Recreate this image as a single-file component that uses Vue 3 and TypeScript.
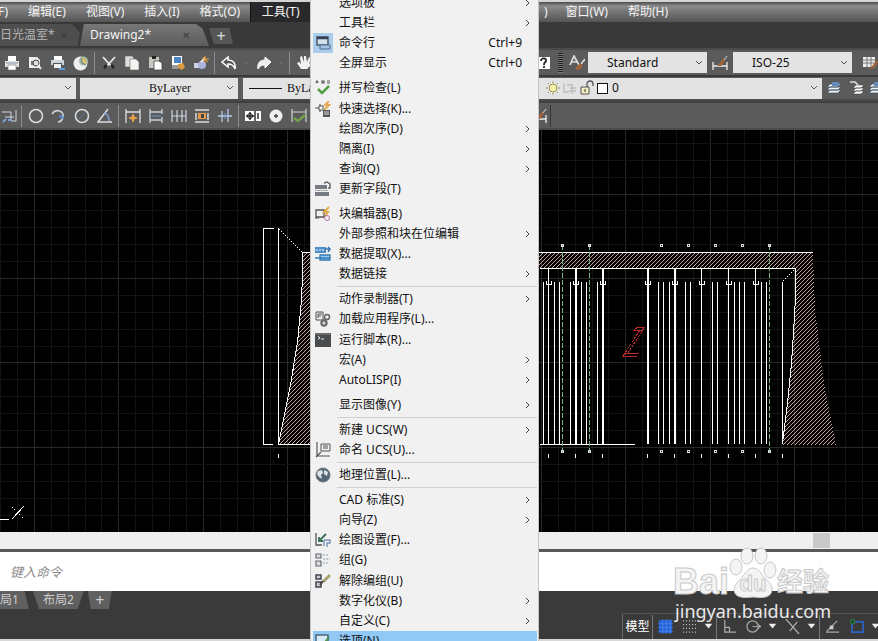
<script setup lang="ts">
import { ref } from 'vue'

interface MenuEntry {
  label: string
  icon?: string
  sub?: boolean
  keys?: string
  checked?: boolean
  active?: boolean
}
type MenuRow = MenuEntry | { rule: 'gap' | 'line' }

const icons: Record<string, string> = {
  print: '<path d="M4 1h8v5H4z" fill="#fff"/><path d="M1 6h14v6H1z" fill="#dce3ea"/><path d="M4 10h8v5H4z" fill="#fff" stroke="#777" stroke-width=".6"/><path d="M2 8h12" stroke="#89a" />',
  preview: '<path d="M2 2h8l3 3v8H2z" fill="#eee"/><path d="M4 6h7v4H4z" fill="#777"/><circle cx="9" cy="8" r="3" fill="#ddd" stroke="#444"/><path d="M11 10l3 4" stroke="#eee" stroke-width="2"/>',
  plot: '<path d="M4 1h8v4H4z" fill="#fff"/><path d="M1 5h13v5H1z" fill="#cdd5da"/><path d="M3 8h9v4H3z" fill="#555"/><path d="M4 9h7v4H4z" fill="#eee"/><path d="M9 14h6" stroke="#5b9be0" stroke-width="2"/>',
  globe: '<circle cx="7.500" cy="8.500" r="7" fill="#eee"/><circle cx="10.500" cy="6" r="4.500" fill="#a7bba0"/><path d="M8 3l4 1 2 4-4 1z" fill="#d9c46a"/><path d="M8 3l1 5 4 2" stroke="#679" fill="none"/>',
  cut: '<path d="M2 2l9 10M14 2L5 12" stroke="#e8e8e8" stroke-width="1.800"/><path d="M3 13l3-3M13 13l-3-3" stroke="#222" stroke-width="2.500"/>',
  copy: '<path d="M1 1h7l2 2v9H1z" fill="#ddd" stroke="#666" stroke-width=".6"/><path d="M6 4h6l3 3v8H6z" fill="#f4f4f0" stroke="#666" stroke-width=".6"/>',
  paste: '<path d="M2 2h10v11H2z" fill="#c8c8c0"/><path d="M5 1h4v3H5z" fill="#222"/><path d="M7 6h5l3 2v7H7z" fill="#fff" stroke="#444" stroke-width=".8"/>',
  match: '<path d="M2 1h10v9H2z" fill="#fff"/><path d="M4 2h7v6H4z" fill="#4a83c4"/><path d="M2 11h7M2 13h6" stroke="#ddd"/><path d="M8 9l5-1 2 4-3 3-4-2z" fill="#dc9b43"/>',
  block: '<path d="M1 8h9v5H1z" fill="#ccd3e4"/><circle cx="9" cy="10" r="4" fill="#aab4dc"/><path d="M8 7l4-4" stroke="#eee" stroke-width="2"/><path d="M12 1v7M9 4h7M10 2l5 5" stroke="#f0a040"/>',
  undo: '<path d="M1 7l6-5v3c5 0 8 3 7 9-1-3-3-5-7-5v3z" fill="#555" stroke="#fff" stroke-width="1.500"/>',
  redo: '<path d="M15 7L9 2v3C4 5 1 8 2 14c2-3 3-4 7-4v3z" fill="#eee" stroke="#fff"/>',
  dash: '<path d="M5 8h6" stroke="#888" stroke-width="1.500"/>',
  hand: '<path d="M5 14L1 8l2-1 2 2-1-7 2-1 2 6V1h2l1 6 2-5 2 1-2 6 2-2 1 2-5 5z" fill="#f2f2f2"/>',
  help: '<path d="M1 2h13v12H1z" fill="#fff"/><path d="M5 6c0-4 6-3 5 0-1 2-2 1-2 4M8 11v2" stroke="#222" stroke-width="1.800" fill="none"/>',
  textstyle: '<path d="M1 10L5 1l5 9M3 7h5" stroke="#ddd" stroke-width="1.700" fill="none"/><path d="M16 4l-4 5" stroke="#ddd" stroke-width="1.500"/><path d="M11 8l3 3-4 4-4-1z" fill="#a5633a"/>',
  dimstyle: '<path d="M1 7v8M15 7v8M1 11h14" stroke="#eee" stroke-width="1.300"/><path d="M15 1l-4 5" stroke="#ddd"/><path d="M11 4l2 2-4 5-4 0z" fill="#a5633a"/>',
  tablestyle: '<path d="M1 2h12v10H1z" fill="#eee"/><path d="M1 5h12M1 8h12M5 2v10M9 2v10" stroke="#777"/><path d="M15 5l-5 6-3 3 5-1 4-6z" fill="#a5633a"/>',
  layers: '<path d="M4 4h11l-3 3H1zM4 7h11l-3 3H1zM4 10h11l-3 3H1z" fill="#f0f3f8" stroke="#456" stroke-width=".8"/><path d="M6 2h7v4H6z" fill="#6689c0"/>',
  layerprev: '<path d="M7 5h8l-3 3H4zM7 8h8l-3 3H4zM7 11h8l-3 3H4z" fill="#fff" stroke="#444" stroke-width=".6"/><path d="M1 2h5l3 3" stroke="#ddd" stroke-width="1.500" fill="none"/>',
  ordinate: '<path d="M0 4h9v9M3 9h9M9 13h5V2" stroke="#cfd8e4" fill="none"/><path d="M1 14l3-3M6 12h4" stroke="#7fa3d8" stroke-width="2"/>',
  circle: '<circle cx="8" cy="8" r="6.500" stroke="#d5dbe1" stroke-width="1.600" fill="none"/>',
  arc: '<path d="M1 6c4-6 12-3 11 3-1 4-3 5-5 5" stroke="#c8d0da" stroke-width="1.700" fill="none"/><path d="M8 8l5 2" stroke="#5a89c9" stroke-width="2"/>',
  diameter: '<circle cx="8" cy="8" r="6.500" stroke="#d5dbe1" stroke-width="1.600" fill="none"/><path d="M5 11l6-6" stroke="#5f7da6"/>',
  angle: '<path d="M11 1L1 14h14" stroke="#ddd" stroke-width="1.500" fill="none"/><path d="M7 5c4 1 5 4 5 8" stroke="#7fa3d8" stroke-width="1.500" fill="none"/>',
  quick: '<path d="M1 1v14M15 1v14M1 4h14" stroke="#ddd" stroke-width="1.300"/><path d="M8 6l1 3 3 1-3 1-1 3-1-3-3-1 3-1z" fill="#e7a04a" stroke="#e7a04a"/>',
  baseline: '<path d="M2 1v14M14 1v5M14 9v6M2 4h12M2 12h12" stroke="#c6d0dd" stroke-width="1.300"/><path d="M4 8h9" stroke="#6794c9"/>',
  chain: '<path d="M1 2v12M6 2v12M11 2v12M15 2v12M1 8h14" stroke="#ccd6e0" stroke-width="1.200"/>',
  space: '<path d="M1 2h14M1 14h14M2 5v7M14 5v7" stroke="#ddd" stroke-width="1.400"/><path d="M4 5h8v6H4z" fill="#e19b4a"/><path d="M7 6v4h3V6z" fill="#444"/>',
  breakd: '<path d="M1 8h14M5 3v11M11 1v13" stroke="#b5cbe8" stroke-width="1.300"/><path d="M7 5l3 3-3 3" stroke="#6a96cf" fill="none"/>',
  tol: '<path d="M0 3h16v10H0z" fill="#fff"/><circle cx="5" cy="8" r="2.500" stroke="#222" fill="none"/><path d="M5 4v8M1 8h8M10 3v10M13 5v6" stroke="#222" stroke-width="1.400"/>',
  center: '<circle cx="8" cy="8" r="6.500" fill="#eee"/><path d="M8 6v4M6 8h4" stroke="#444" stroke-width="1.500"/>',
  inspect: '<path d="M1 1v13M15 1v13M1 4h14" stroke="#ccd6cc" stroke-width="1.200"/><path d="M3 10l4 3 7-6" stroke="#74a24c" stroke-width="2.500" fill="none"/>',
  window: '<path d="M2 2h11v8H2z" fill="#d5e0e8" stroke="#485b72" stroke-width="1.500"/><path d="M2 3h11" stroke="#33435a" stroke-width="2.500"/><path d="M5 10h10v4H5z" fill="#a9c4de" stroke="#4b6b91"/>',
  spell: '<path d="M1 3l1-2 1 2M7 1h2v2H7zM12 1h3M12 3h3" stroke="#555" stroke-width="1.200" fill="none"/><path d="M3 9l4 4 7-7" stroke="#54a044" stroke-width="2.500" fill="none"/>',
  select: '<path d="M0 7h8M5 3v8" stroke="#555" stroke-width="1.200"/><path d="M4 5h4v4H4z" fill="#fff" stroke="#555"/><path d="M14 0l-4 4h4l-5 5" stroke="#e2ab54" stroke-width="2" fill="none"/><path d="M8 9h7v7H8z" fill="#555"/><path d="M9 11h5M9 13h5" stroke="#ddd"/>',
  field: '<path d="M0 4h12v4H0zM0 11h14v4H0z" fill="#777c84"/><path d="M0 9.500h13" stroke="#aaa"/><path d="M9 2l3-1 3 2v4h-2" stroke="#666" stroke-width="1.500" fill="none"/>',
  blockedit: '<path d="M1 4h8v7H1z" stroke="#555" stroke-width="1.300" fill="none"/><path d="M14 1l-5 5h4l-3 4" stroke="#e0aa48" stroke-width="2" fill="none"/><circle cx="12" cy="12" r="2.500" stroke="#b673a3" fill="none"/><path d="M0 12h4" stroke="#555"/>',
  extract: '<path d="M0 1h11v6H0z" fill="#4d8fc7"/><path d="M1 4h8" stroke="#fff" stroke-dasharray="2 1"/><path d="M10 3h5M13 1l2 2-2 3" stroke="#3a79b0" stroke-width="1.500" fill="none"/><path d="M5 9h10v5H5z" fill="#9ccbee" stroke="#347bb5" stroke-width="1.300"/><path d="M0 12h15" stroke="#347bb5" stroke-width="1.500"/>',
  load: '<path d="M1 1h7v8H1z" fill="#eee" stroke="#555"/><path d="M3 7V3h4M3 5h3" stroke="#555" fill="none"/><circle cx="12" cy="6" r="2.500" stroke="#666" stroke-width="1.500" fill="none"/><circle cx="9" cy="12" r="2.700" stroke="#666" stroke-width="2" fill="#ccc"/>',
  script: '<path d="M0 1h16v14H0z" fill="#4a4d4f"/><path d="M0 2h16" stroke="#888"/><path d="M3 4l2 2-2 1M6 7h3" stroke="#eee" fill="none"/>',
  ucs: '<path d="M2 0v14h13M1 15l5-5" stroke="#555" stroke-width="1.200" fill="none"/><path d="M6 2h9v7H6z" fill="#eee" stroke="#555"/><path d="M8 4h5M8 6h5" stroke="#555"/>',
  earth: '<circle cx="8" cy="8" r="7" fill="#526574" stroke="#777"/><path d="M3 4l4-1 1 3-2 2 1 4-3-2-2-3zM9 3l4 2-1 4-3-2z" fill="#dce5e9"/>',
  draft: '<path d="M1 1v12h6" stroke="#555" stroke-width="1.300" fill="none"/><path d="M11 2L4 9M4 5v4h4" stroke="#3c7057" stroke-width="1.800" fill="none"/><path d="M9 8h6v3h-3v4M9 8v6" stroke="#7e96ba" stroke-width="1.500" fill="none"/>',
  group: '<path d="M1 2h5v4H1zM1 9h5v5H1z" stroke="#667" stroke-width="1.200" fill="#ddd"/><path d="M8 3h6M8 7h7M8 11h6" stroke="#8aa5bc" stroke-dasharray="2 1"/>',
  ungroup: '<path d="M1 2h5v4H1zM1 9h5v5H1z" stroke="#445" stroke-width="1.500" fill="#ccc"/><path d="M15 2L8 9" stroke="#a8a071" stroke-width="3"/><path d="M8 8l-3 4" stroke="#444" stroke-width="2"/>',
  options: '<path d="M1 2h12v11H1z" fill="#d7eaf6" stroke="#4b657b" stroke-width="1.500"/><path d="M5 9l3 3 6-8" stroke="#4f9448" stroke-width="2" fill="none"/>',
  sgrid: '<path d="M1 1h14v14H1z" fill="#2464d8"/><path d="M5 0v16M9 0v16M13 0v16M0 5h16M0 9h16M0 13h16" stroke="#5a92f2" stroke-width=".6"/>',
  sdots: '<path d="M1 2h14M1 6h14M1 10h14M1 14h14" stroke="#bbb" stroke-width="1.200" stroke-dasharray="1.200 2"/>',
  sarrow: '<path d="M4 5h8l-4 5z" fill="#eee"/>',
  sortho: '<path d="M3 1v13h12M3 9h5v5" stroke="#aaa" stroke-width="1.300" fill="none"/>',
  spolar: '<circle cx="7" cy="8" r="6" stroke="#aaa" stroke-width="1.300" fill="none"/><path d="M7 8h9M12 5l4 3-4 3" stroke="#aaa" fill="none"/>',
  siso: '<path d="M1 0l14 16M5 13L13 3" stroke="#aaa" stroke-width="1.400"/>',
  strack: '<path d="M1 14h14M2 13L13 2" stroke="#aaa" stroke-width="1.300"/><path d="M5 7h4v4H5z" fill="#ccc"/>',
  sosnap: '<path d="M3 3h12v11H3z" stroke="#2e62c7" stroke-width="1.800" fill="none"/><circle cx="4" cy="3" r="2.500" fill="#174d27" stroke="#3c8b4d"/>',
  sun: '<circle cx="8" cy="8" r="4" fill="#f6f3a8" stroke="#99935a"/><path d="M8 1v2M8 13v2M1 8h2M13 8h2M3 3l1 1M12 12l1 1M13 3l-1 1M3 13l1-1" stroke="#99935a"/>',
  freeze: '<path d="M2 3v9h5M5 5h6M8 8h6M10 5v9M7 11h7" stroke="#bdbdbd" stroke-width="1.300" fill="none"/>',
  lock: '<path d="M2 7h8v7H2z" fill="#f3efc2" stroke="#555"/><path d="M8 7V4c0-4 6-4 6 0v2" stroke="#555" stroke-width="1.300" fill="none"/><path d="M6 9v3" stroke="#333"/>',
}

const topMenus = ['编辑(E)', '视图(V)', '插入(I)', '格式(O)']
const rightMenus = ['窗口(W)', '帮助(H)']
const standardTools: string[][] = [
  ['print', 'preview', 'plot', 'globe'],
  ['cut', 'copy', 'paste', 'match', 'block'],
  ['undo', 'dash', 'redo', 'dash'],
  ['hand'],
]
const dimTools: string[][] = [
  ['ordinate'],
  ['circle', 'arc', 'diameter', 'angle'],
  ['quick', 'baseline', 'chain', 'space', 'breakd'],
  ['tol', 'center', 'inspect'],
]
const statusTools: string[][] = [
  ['sgrid', 'sdots', 'sarrow'],
  ['sortho', 'spolar', 'sarrow', 'siso', 'sarrow'],
  ['strack', 'sosnap', 'sarrow'],
]

const menu: MenuRow[] = [
  { label: '选项板', sub: true },
  { label: '工具栏', sub: true },
  { label: '命令行', icon: 'window', keys: 'Ctrl+9', checked: true },
  { label: '全屏显示', keys: 'Ctrl+0' },
  { rule: 'gap' },
  { label: '拼写检查(L)', icon: 'spell' },
  { label: '快速选择(K)...', icon: 'select' },
  { label: '绘图次序(D)', sub: true },
  { label: '隔离(I)', sub: true },
  { label: '查询(Q)', sub: true },
  { label: '更新字段(T)', icon: 'field' },
  { rule: 'gap' },
  { label: '块编辑器(B)', icon: 'blockedit' },
  { label: '外部参照和块在位编辑', sub: true },
  { label: '数据提取(X)...', icon: 'extract' },
  { label: '数据链接', sub: true },
  { rule: 'line' },
  { label: '动作录制器(T)', sub: true },
  { label: '加载应用程序(L)...', icon: 'load' },
  { label: '运行脚本(R)...', icon: 'script' },
  { label: '宏(A)', sub: true },
  { label: 'AutoLISP(I)', sub: true },
  { rule: 'gap' },
  { label: '显示图像(Y)', sub: true },
  { rule: 'line' },
  { label: '新建 UCS(W)', sub: true },
  { label: '命名 UCS(U)...', icon: 'ucs' },
  { rule: 'line' },
  { label: '地理位置(L)...', icon: 'earth' },
  { rule: 'line' },
  { label: 'CAD 标准(S)', sub: true },
  { label: '向导(Z)', sub: true },
  { label: '绘图设置(F)...', icon: 'draft' },
  { label: '组(G)', icon: 'group' },
  { label: '解除编组(U)', icon: 'ungroup' },
  { label: '数字化仪(B)', sub: true },
  { label: '自定义(C)', sub: true },
  { label: '选项(N)...', icon: 'options', active: true },
]

const command = ref('')

// Drawing geometry
const gridLines = (start: number, count: number) =>
  Array.from({ length: count }, (_, i) => ({ at: Math.round(start + i * 16.9), major: i % 5 === 2 }))
const gridX = gridLines(0, 53)
const gridY = gridLines(75.2, 28)
const thin = [543, 554, 559, 570, 581, 586, 597, 658, 663, 669, 685, 690, 712, 717, 734, 739, 744, 761, 766, 782]
const posts = [
  { x: 548, w: 1 }, { x: 575, w: 2 }, { x: 602, w: 2 }, { x: 647, w: 2 }, { x: 674, w: 2 },
  { x: 701, w: 1 }, { x: 728, w: 1 }, { x: 755, w: 1 },
]
const axes = [562, 589, 769]
const marks = [562, 589, 661, 688, 715, 742, 769]
</script>

<template>
  <div class="app">
    <nav class="menubar" aria-label="主菜单">
      <button class="stub">F)</button>
      <button v-for="m in topMenus" :key="m">{{ m }}</button>
      <button class="open">工具(T)</button>
      <div class="menubar-right">
        <button class="stub-right">)</button>
        <button v-for="m in rightMenus" :key="m">{{ m }}</button>
      </div>
    </nav>

    <div class="tabs">
      <button class="tab dim"><span>日光温室*</span><span class="x">✕</span></button>
      <button class="tab current"><span>Drawing2*</span><span class="x">✕</span></button>
      <button class="tab add" aria-label="新建">+</button>
    </div>

    <div class="bar bar-std">
      <div v-for="(g, i) in standardTools" :key="i" class="group">
        <button v-for="(t, j) in g" :key="j" class="tool" :class="{ narrow: t === 'dash' }" :aria-label="t">
          <svg viewBox="0 0 16 16" v-html="icons[t]"></svg>
        </button>
      </div>
      <div class="right">
        <button class="tool" aria-label="help"><svg viewBox="0 0 16 16" v-html="icons.help"></svg></button>
        <span class="grip"></span>
        <button class="tool" aria-label="text style"><svg viewBox="0 0 16 16" v-html="icons.textstyle"></svg></button>
        <div class="combo style-combo">
          <select aria-label="文字样式"><option>Standard</option></select>
          <svg class="chev" viewBox="0 0 8 6"><path d="M1 1l3 3 3-3" /></svg>
        </div>
        <button class="tool wide" aria-label="dimension style"><svg viewBox="0 0 16 16" v-html="icons.dimstyle"></svg></button>
        <div class="combo style-combo">
          <select aria-label="标注样式"><option>ISO-25</option></select>
          <svg class="chev" viewBox="0 0 8 6"><path d="M1 1l3 3 3-3" /></svg>
        </div>
        <button class="tool last" aria-label="table style"><svg viewBox="0 0 16 16" v-html="icons.tablestyle"></svg></button>
      </div>
    </div>

    <div class="bar bar-props">
      <div class="combo first-combo">
        <select aria-label="图层状态"><option></option></select>
        <svg class="chev" viewBox="0 0 8 6"><path d="M1 1l3 3 3-3" /></svg>
      </div>
      <div class="combo color-combo">
        <select aria-label="颜色"><option>ByLayer</option></select>
        <svg class="chev" viewBox="0 0 8 6"><path d="M1 1l3 3 3-3" /></svg>
      </div>
      <div class="combo line-combo">
        <span class="sample"></span>
        <select aria-label="线型"><option>ByLayer</option></select>
      </div>
      <div class="right">
        <div class="combo layer-combo">
          <svg class="li" viewBox="0 0 16 16" v-html="icons.sun"></svg>
          <svg class="li" viewBox="0 0 16 16" v-html="icons.freeze"></svg>
          <svg class="li" viewBox="0 0 16 16" v-html="icons.lock"></svg>
          <span class="swatch"></span>
          <select aria-label="图层"><option>0</option></select>
          <svg class="chev" viewBox="0 0 8 6"><path d="M1 1l3 3 3-3" /></svg>
        </div>
        <button class="tool" aria-label="layers"><svg viewBox="0 0 16 16" v-html="icons.layers"></svg></button>
        <button class="tool" aria-label="layer previous"><svg viewBox="0 0 16 16" v-html="icons.layerprev"></svg></button>
        <button class="tool cut" aria-label="layer states"><svg viewBox="0 0 16 16" v-html="icons.layers"></svg></button>
      </div>
    </div>

    <div class="bar bar-dim">
      <div v-for="(g, i) in dimTools" :key="i" class="group">
        <button v-for="t in g" :key="t" class="tool" :class="{ lead: t === 'ordinate' }" :aria-label="t">
          <svg viewBox="0 0 16 16" v-html="icons[t]"></svg>
        </button>
      </div>
      <div class="right dim-end">
        <button class="tool" aria-label="dimension style"><svg viewBox="0 0 16 16" v-html="icons.dimstyle"></svg></button>
      </div>
    </div>

    <main class="canvas">
      <svg class="drawing" viewBox="0 130 878 402" preserveAspectRatio="xMidYMid slice" shape-rendering="crispEdges">
        <defs>
          <pattern id="hatch" width="4" height="4" patternUnits="userSpaceOnUse">
            <path d="M3 0h1v1h-1zM2 1h1v1h-1zM1 2h1v1h-1zM0 3h1v1h-1z" fill="#c79f9b" />
          </pattern>
        </defs>
        <rect v-for="g in gridX" :key="'x' + g.at" :x="g.at" y="130" width="1" height="402" :fill="g.major ? '#292929' : '#131313'" />
        <rect v-for="g in gridY" :key="'y' + g.at" x="0" :y="g.at" width="878" height="1" :fill="g.major ? '#292929' : '#131313'" />

        <path d="M303 252H813L815 310L824 383L836 445H782L787 403L791 363L794 317L795 295V268H310V445H279L290 385L297 342L301 300L303 275Z" fill="url(#hatch)" />
        <g fill="none" stroke="#fff">
          <path d="M274 228.500H263.500V444.500H273M278.500 228V444M310 444.500H278.500L290.500 385L297.500 342L301.500 300L302.500 275V252.500H813" />
          <path d="M279 229L302 252" stroke-dasharray="1.400 1.400" />
          <path d="M540 268.500H795.500V295L794.500 317L791.500 363L787.500 403L782.500 443" />
          <path d="M783 281L794 270" stroke-dasharray="1.400 1.400" />
          <path d="M540 444.500H635M278.500 454v4" />
          <path v-for="p in posts" :key="p.x" :d="`M${p.x - 2} 281v3h5v-3M${p.x + 0.5} 454v4`" />
          <path d="M782.500 454v4" />
        </g>
        <rect v-for="x in thin" :key="x" :x="x" y="282" width="1" height="162" fill="#fff" />
        <rect v-for="p in posts" :key="'p' + p.x" :x="p.x" y="268" :width="p.w" height="176" fill="#fff" />
        <path v-for="x in axes" :key="'a' + x" :d="`M${x + 0.5} 245V452`" stroke="#72b47b" stroke-dasharray="5 2" />
        <g fill="none" stroke="#ddd">
          <path v-for="x in marks" :key="'m' + x" :d="`M${x - 1} 244.500h2v1.500h-2zM${x - 1} 450.500h2v1.500h-2z`" />
        </g>
        <g fill="none" stroke="#b5282c">
          <path d="M633 331L637 327.500H645M639 353.500H624M622 356.500H637M634 330.500H643" />
          <path d="M644 328L628 353M640 330L623 356" stroke-dasharray="3 1" />
        </g>
        <g fill="none" stroke="#fff">
          <path d="M0 519.500H9M12 519L24 506" />
          <path d="M12 507L24 519" stroke-dasharray="1.400 2" />
        </g>
      </svg>
    </main>

    <div class="scroll"><span class="thumb"></span></div>

    <div class="command">
      <input v-model="command" type="text" placeholder="键入命令" aria-label="键入命令" />
    </div>

    <footer class="footer">
      <div class="layouts">
        <button class="layout head">局1</button>
        <button class="layout">布局2</button>
        <button class="layout plus" aria-label="新建布局">+</button>
      </div>
      <div class="status">
        <button class="model">模型</button>
        <div v-for="(g, i) in statusTools" :key="i" class="sgroup">
          <button v-for="(t, j) in g" :key="j" class="stool" :class="{ arrow: t === 'sarrow' }" :aria-label="t">
            <svg viewBox="0 0 16 16" v-html="icons[t]"></svg>
          </button>
        </div>
      </div>
    </footer>

    <div class="popup" role="menu" aria-label="工具">
      <template v-for="(row, i) in menu" :key="i">
        <div v-if="'rule' in row" class="rule" :class="row.rule" role="separator"></div>
        <button v-else class="item" :class="{ active: row.active }" role="menuitem">
          <span class="ico" :class="{ checked: row.checked }">
            <svg v-if="row.icon" viewBox="0 0 16 16" v-html="icons[row.icon]"></svg>
          </span>
          <span class="label">{{ row.label }}</span>
          <span v-if="row.keys" class="keys">{{ row.keys }}</span>
          <svg v-if="row.sub" class="arrow" viewBox="0 0 6 8"><path d="M1 1l3 3-3 3" /></svg>
        </button>
      </template>
    </div>

    <div class="watermark">
      <div class="brand">
        <span class="word">Bai</span>
        <span class="paw">
          <svg viewBox="0 0 48 52">
            <ellipse cx="7" cy="20" rx="6" ry="8" />
            <ellipse cx="18" cy="9" rx="6" ry="8" />
            <ellipse cx="32" cy="9" rx="6" ry="8" />
            <ellipse cx="41" cy="23" rx="6" ry="8" />
            <path d="M24 21c5 0 7 4 10 8 4 5 10 8 9 14-1 8-9 8-19 7-10 1-18 1-19-7 0-6 6-9 9-14 3-4 5-8 10-8z" />
          </svg>
          <span class="du">du</span>
        </span>
        <span class="word cn">经验</span>
      </div>
      <div class="url">jingyan.baidu.com</div>
    </div>
  </div>
</template>

<style>
body {
  background: #3a3a3b;
}
</style>

<style scoped>
.app {
  position: relative;
  display: flex;
  flex-direction: column;
  min-height: 100vh;
  overflow: hidden;
  font-family: "Noto Sans", "Noto Sans CJK SC", sans-serif;
  font-size: 12px;
  line-height: 16px;
  color: #111;
}
button,
select,
input {
  font: inherit;
  color: inherit;
  border: 0;
  margin: 0;
  padding: 0;
  background: none;
  border-radius: 0;
  outline: 0;
}
button {
  white-space: nowrap;
}
.menubar {
  display: flex;
  height: 20px;
  border-top: 2px solid #d4d4d4;
  background: linear-gradient(#4c4c4c, #8c8c8c 4px, #747474 10px, #555);
  color: #f4f4f4;
}
.menubar button {
  padding: 0 10px;
}
.menubar .stub {
  display: flex;
  align-items: center;
  justify-content: flex-end;
  width: 18px;
  box-sizing: border-box;
  padding: 0 10px 0 0;
}
.menubar .open {
  width: 60px;
  background: #29292b;
  border-left: 1px solid #111;
}
.menubar-right {
  display: flex;
  margin-left: auto;
  margin-right: 200px;
}
.menubar-right .stub-right {
  padding: 0 8px 0 0;
}
.tabs {
  display: flex;
  align-items: flex-end;
  height: 26px;
  box-sizing: border-box;
  padding-bottom: 2px;
  background: #39393a;
}
.tab {
  display: flex;
  align-items: center;
  justify-content: space-between;
  height: 22px;
  color: #f4f4f4;
}
.tab.dim {
  width: 80px;
  padding: 0 12px 0 0;
  background: #4e4e4e;
  color: #b4b4b4;
  clip-path: polygon(0 0, 90% 0, 100% 40%, 97% 100%, 0 100%);
}
.tab.current {
  width: 129px;
  padding: 0 19px 0 10px;
  background: linear-gradient(#777, #5c5c5c);
  clip-path: polygon(3% 0, 90% 0, 95% 20%, 100% 100%, 0 100%);
}
.tab .x {
  color: #3c3c3c;
  font-size: 10px;
}
.tab.add {
  justify-content: center;
  width: 24px;
  height: 16px;
  margin: 0 0 2px;
  background: #565656;
  font-size: 16px;
  color: #ddd;
  clip-path: polygon(0 0, 85% 0, 100% 100%, 20% 100%);
}
.bar {
  display: flex;
  align-items: center;
  box-sizing: border-box;
  background: #5b5b5b;
  border-top: 2px solid #4a4a4a;
}
.bar-std {
  height: 27px;
}
.bar-props {
  height: 26px;
  border-top-color: #3a3a3a;
  border-bottom: 2px solid #4a4a4a;
}
.bar-dim {
  height: 29px;
  border-top-color: #404040;
  border-bottom: 2px solid #4a4a4a;
}
.group {
  display: flex;
}
.group + .group::before {
  content: "";
  width: 1px;
  height: 22px;
  margin: 0 2px;
  background: #8c8c8c;
}
.tool {
  display: flex;
  align-items: center;
  justify-content: center;
  flex: none;
  width: 23px;
  height: 22px;
}
.tool svg {
  width: 16px;
  height: 16px;
  fill: none;
}
.tool.narrow {
  width: 12px;
}
.tool.narrow svg {
  width: 8px;
}
.tool.wide {
  width: 26px;
}
.tool.lead {
  width: 19px;
}
.tool.last {
  width: 26px;
  justify-content: flex-end;
}
.tool.cut {
  width: 10px;
  justify-content: flex-start;
  overflow: hidden;
}
.tool.cut svg {
  flex: none;
}
.right {
  display: flex;
  align-items: center;
  margin-left: auto;
}
.dim-end {
  margin-right: 327px;
}
.dim-end .tool {
  border-right: 1px solid #333;
}
.grip {
  width: 5px;
  height: 20px;
  margin: 0 2px 0 3px;
  background: repeating-linear-gradient(#222 0 1px, #777 1px 2px);
}
.combo {
  display: flex;
  align-items: center;
  height: 21px;
  box-sizing: border-box;
  background: #e3e3e3;
}
.combo select {
  flex: 1;
  min-width: 0;
  height: 21px;
  appearance: none;
}
.chev {
  flex: none;
  width: 8px;
  height: 6px;
  margin-right: 4px;
}
.chev path {
  fill: none;
  stroke: #555;
}
.style-combo {
  width: 119px;
  padding-left: 19px;
}
.first-combo {
  width: 76px;
  margin-right: 4px;
}
.color-combo,
.line-combo {
  font-family: "Liberation Serif", serif;
}
.color-combo {
  width: 158px;
  margin-right: 5px;
  padding-left: 69px;
}
.line-combo {
  width: 110px;
  padding-left: 6px;
}
.sample {
  width: 33px;
  height: 1px;
  margin-right: 5px;
  background: #111;
}
.layer-combo {
  width: 302px;
  padding-left: 25px;
}
.li {
  width: 16px;
  height: 16px;
  margin-right: 1px;
  fill: none;
}
.swatch {
  width: 9px;
  height: 9px;
  margin: 0 4px 0 1px;
  border: 1px solid #111;
  background: #fff;
}
.canvas {
  position: relative;
  flex: 1 0 402px;
  background: #000;
}
.drawing {
  position: absolute;
  inset: 0;
  width: 100%;
  height: 100%;
}
.scroll {
  display: flex;
  justify-content: flex-end;
  align-items: center;
  height: 17px;
  padding-right: 48px;
  background: #efeff0;
  border-bottom: 3px solid #585858;
}
.thumb {
  width: 17px;
  height: 15px;
  background: #c9c9c9;
}
.command {
  display: flex;
  height: 39px;
  background: #fff;
}
.command input {
  flex: 1;
  padding: 0 10px;
  font-size: 13px;
  font-style: italic;
}
.command input::placeholder {
  color: #8d8d8d;
  opacity: 1;
}
.footer {
  display: flex;
  justify-content: space-between;
  height: 48px;
  background: #3a3a3b;
  border-bottom: 2px solid #d8d8d8;
}
.layouts {
  display: flex;
  height: 18px;
  gap: 4px;
}
.layout {
  padding: 0 10px;
  background: #606060;
  color: #cecece;
  clip-path: polygon(0 0, 100% 0, 88% 100%, 12% 100%);
}
.layout.head {
  padding: 0 10px 0 0;
  clip-path: polygon(0 0, 85% 0, 100% 100%, 0 100%);
}
.layout.plus {
  width: 24px;
  padding: 0;
  font-size: 16px;
}
.status {
  display: flex;
  align-items: center;
  align-self: flex-end;
  height: 26px;
  margin-right: -5px;
  border-left: 1px solid #666;
  border-top: 1px solid #555;
  box-sizing: border-box;
}
.model {
  width: 29px;
  height: 24px;
  color: #fff;
}
.sgroup {
  display: flex;
  align-items: center;
  height: 24px;
  border-left: 1px solid #777;
}
.stool {
  display: flex;
  align-items: center;
  justify-content: center;
  width: 24px;
  height: 22px;
}
.stool.arrow {
  width: 15px;
}
.stool svg {
  flex: none;
  width: 15px;
  height: 15px;
  fill: none;
}
.popup {
  position: absolute;
  top: -7px;
  bottom: -10px;
  left: 310px;
  display: flex;
  flex-direction: column;
  width: 229px;
  box-sizing: border-box;
  padding: 0 1px 0 2px;
  background: #f1f1f2;
  border: solid #c4c4c4;
  border-width: 0 1px;
}
.item {
  display: flex;
  align-items: center;
  flex: 1 1 20px;
  min-height: 0;
  text-align: left;
}
.item.active {
  background: #91c8f5;
}
.ico {
  display: flex;
  align-items: center;
  justify-content: center;
  width: 20px;
  height: 20px;
  margin-right: 6px;
}
.ico.checked {
  background: #a9cdea;
}
.ico svg {
  width: 16px;
  height: 16px;
  fill: none;
}
.label {
  flex: 1;
}
.keys {
  margin-right: 15px;
}
.item .arrow {
  width: 6px;
  height: 8px;
  margin-right: 6px;
}
.item .arrow path {
  fill: none;
  stroke: #444;
}
.rule {
  flex: none;
  height: 5px;
  margin-left: 24px;
}
.rule.line {
  background: linear-gradient(transparent 2px, #d0d0d0 2px, #d0d0d0 3px, transparent 3px);
}
.watermark {
  position: absolute;
  right: 47px;
  bottom: 18px;
  display: flex;
  flex-direction: column;
  align-items: flex-end;
  pointer-events: none;
}
.brand {
  display: flex;
  align-items: flex-end;
  padding-right: 2px;
}
.word,
.du {
  font-family: "Liberation Sans", "Noto Sans CJK SC", sans-serif;
  font-weight: 700;
  font-size: 36px;
  line-height: 34px;
  color: #f4f4f4;
  -webkit-text-stroke: 1px #c9c9c9;
}
.word.cn {
  font-size: 26px;
}
.paw {
  position: relative;
  display: flex;
  justify-content: center;
}
.paw svg {
  width: 48px;
  height: 52px;
}
.paw ellipse,
.paw path {
  fill: #f4f4f4;
  stroke: #c9c9c9;
}
.du {
  position: absolute;
  bottom: 4px;
  font-size: 22px;
  line-height: 22px;
}
.url {
  font-size: 18px;
  line-height: 24px;
  color: #e9e9e9;
}
</style>
